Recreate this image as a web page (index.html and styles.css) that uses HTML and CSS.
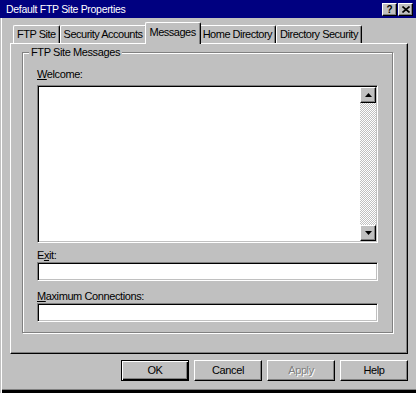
FILE: index.html
```html
<!DOCTYPE html>
<html lang="en">
<head>
    <meta charset="UTF-8">
    <title>Default FTP Site Properties</title>
    <link rel="stylesheet" href="styles.css">
</head>
<body>
    <div class="window">
        <div class="titlebar">
            <span class="title">Default FTP Site Properties</span>
            <span class="tbtn">?</span>
            <span class="tbtn close">
                <svg width="8" height="7" viewBox="0 0 8 7"><path d="M0.5 0.5 L7.5 6.5 M7.5 0.5 L0.5 6.5" stroke="#000" stroke-width="1.6"/></svg>
            </span>
        </div>

        <div class="content">
            <div class="tabs">
                <div class="tab">FTP Site</div>
                <div class="tab">Security Accounts</div>
                <div class="tab active">Messages</div>
                <div class="tab">Home Directory</div>
                <div class="tab">Directory Security</div>
            </div>

            <div class="panel">
                <fieldset class="group">
                    <legend>FTP Site Messages</legend>

                    <div class="field-label welcome-label"><u>W</u>elcome:</div>
                    <div class="memo">
                        <div class="memo-text"></div>
                        <div class="scrollbar">
                            <div class="sbtn">
                                <svg width="7" height="4" viewBox="0 0 7 4"><path d="M3.5 0 L7 4 L0 4 Z" fill="#000"/></svg>
                            </div>
                            <div class="trough"></div>
                            <div class="sbtn">
                                <svg width="7" height="4" viewBox="0 0 7 4"><path d="M0 0 L7 0 L3.5 4 Z" fill="#000"/></svg>
                            </div>
                        </div>
                    </div>

                    <div class="field-label exit-label">E<u>x</u>it:</div>
                    <div class="edit"></div>

                    <div class="field-label max-label"><u>M</u>aximum Connections:</div>
                    <div class="edit"></div>
                </fieldset>
            </div>

            <div class="buttons">
                <div class="btn default">OK</div>
                <div class="btn">Cancel</div>
                <div class="btn disabled">Apply</div>
                <div class="btn">Help</div>
            </div>
        </div>
    </div>
</body>
</html>
```

FILE: styles.css
```css
body {
    margin: 0;
    font-family: "Liberation Sans", Arial, sans-serif;
    font-size: 11px;
    letter-spacing: -0.4px;
    color: #000;
}
.window {
    width: 416px;
    height: 393px;
    background: #c0c0c0;
    box-sizing: border-box;
    display: flex;
    flex-direction: column;
    box-shadow: inset 1px 0 0 #c0c0c0, inset 2px 0 0 #fff, inset 0 -3px 0 #000, inset 0 -4px 0 #808080;
}
.titlebar {
    height: 18px;
    flex: none;
    background: #000080;
    color: #fff;
    display: flex;
    align-items: center;
    padding: 0 3px 0 6px;
    letter-spacing: -0.3px;
}
.title {
    flex: 1;
    font-size: 10.5px;
}
.tbtn {
    width: 15px;
    height: 13px;
    box-sizing: border-box;
    margin-left: 1px;
    background: #c0c0c0;
    border: 1px solid;
    border-color: #fff #000 #000 #fff;
    box-shadow: inset -1px -1px 0 #808080;
    color: #000;
    font-weight: bold;
    font-size: 10px;
    line-height: 11px;
    text-align: center;
    display: flex;
    align-items: center;
    justify-content: center;
}
.content {
    padding: 4px 8px 0 10px;
}
.tabs {
    display: flex;
    align-items: flex-end;
    height: 21px;
    padding-left: 3px;
}
.tab {
    height: 18px;
    box-sizing: border-box;
    padding: 0 3px;
    line-height: 16px;
    border-top: 1px solid #fff;
    border-left: 1px solid #fff;
    border-right: 1px solid #000;
    border-radius: 2px 2px 0 0;
    box-shadow: inset -1px 0 0 #808080;
    white-space: nowrap;
    letter-spacing: -0.5px;
}
.tab.active {
    height: 22px;
    margin: 0 -2px -1px;
    padding: 0 4px;
    line-height: 18px;
    background: #c0c0c0;
    position: relative;
    z-index: 1;
}
.panel {
    width: 398px;
    height: 311px;
    box-sizing: border-box;
    border: 1px solid;
    border-color: #fff #000 #000 #fff;
    box-shadow: inset -1px -1px 0 #808080;
    padding: 2px 14px 0 11px;
}
.group {
    margin: 0;
    padding: 0 14px 10px 14px;
    border: 1px solid #808080;
    box-shadow: inset 1px 1px 0 #fff, 1px 1px 0 #fff;
}
.group legend {
    margin-left: -8px;
    padding: 0 2px;
    line-height: 12px;
    background: #c0c0c0;
}
.field-label {
    line-height: 12px;
    margin-bottom: 1px;
}
.welcome-label {
    margin-top: 10px;
    margin-bottom: 5px;
}
.exit-label {
    margin-top: 6px;
}
.max-label {
    margin-top: 9px;
}
.memo, .edit {
    box-sizing: border-box;
    background: #fff;
    border: 1px solid;
    border-color: #808080 #fff #fff #808080;
    box-shadow: inset 1px 1px 0 #000, inset -1px -1px 0 #c0c0c0;
}
.memo {
    height: 158px;
    display: flex;
    padding: 1px 1px 1px 1px;
}
.memo-text {
    flex: 1;
}
.scrollbar {
    width: 16px;
    display: flex;
    flex-direction: column;
}
.sbtn {
    height: 16px;
    box-sizing: border-box;
    background: #c0c0c0;
    border: 1px solid;
    border-color: #fff #000 #000 #fff;
    box-shadow: inset -1px -1px 0 #808080;
    display: flex;
    align-items: center;
    justify-content: center;
}
.trough {
    flex: 1;
    background-image: repeating-conic-gradient(#fff 0 25%, #c0c0c0 0 50%);
    background-size: 2px 2px;
}
.edit {
    height: 19px;
}
.buttons {
    display: flex;
    justify-content: flex-end;
    gap: 5px;
    margin-top: 6px;
}
.btn {
    width: 68px;
    height: 21px;
    box-sizing: border-box;
    border: 1px solid;
    border-color: #fff #000 #000 #fff;
    box-shadow: inset -1px -1px 0 #808080;
    text-align: center;
    line-height: 19px;
}
.btn.default {
    border-color: #000;
    box-shadow: inset 1px 1px 0 #fff, inset -1px -1px 0 #000, inset -2px -2px 0 #808080;
}
.btn.disabled {
    color: #808080;
    text-shadow: 1px 1px 0 #fff;
}
```
